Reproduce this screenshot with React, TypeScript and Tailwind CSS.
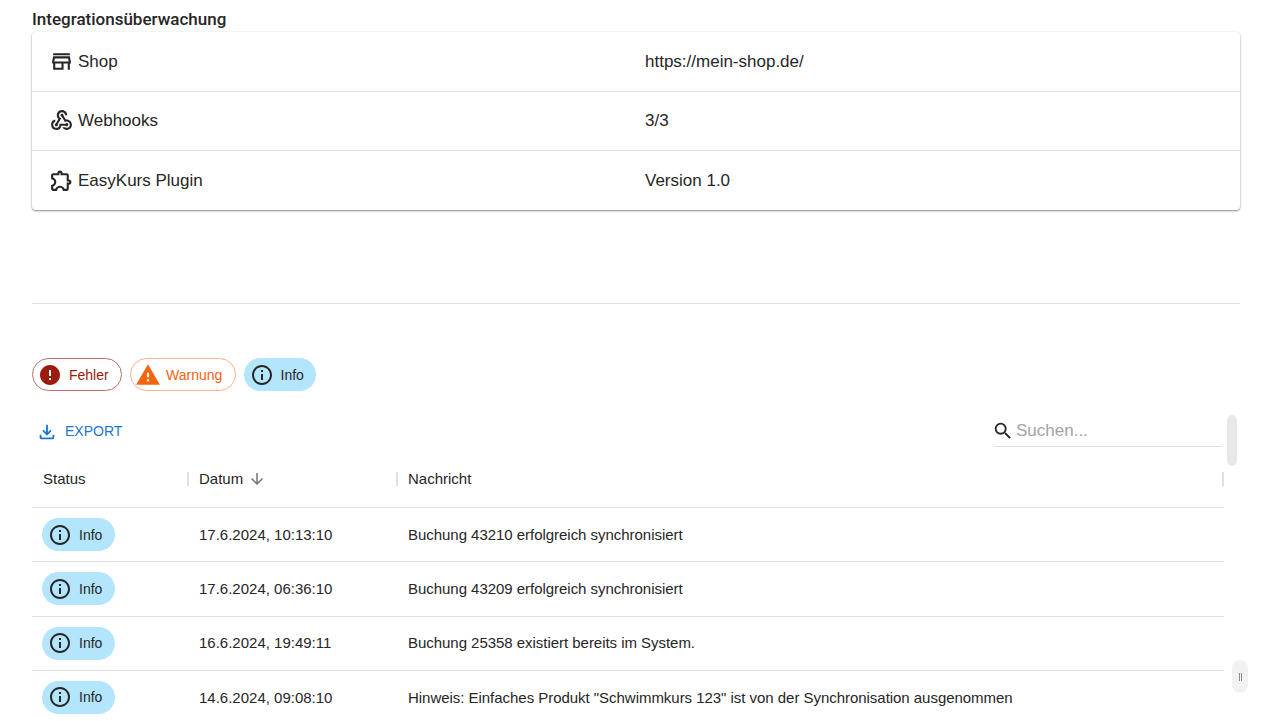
import { MdArrowDownward, MdError, MdInfoOutline, MdOutlineExtension, MdOutlineFileDownload, MdOutlineStore, MdSearch, MdWarning, MdWebhook } from "react-icons/md";
import type { ReactNode } from "react";

const ROWS = [
  { date: "17.6.2024, 10:13:10", msg: "Buchung 43210 erfolgreich synchronisiert" },
  { date: "17.6.2024, 06:36:10", msg: "Buchung 43209 erfolgreich synchronisiert" },
  { date: "16.6.2024, 19:49:11", msg: "Buchung 25358 existiert bereits im System." },
  { date: "14.6.2024, 09:08:10", msg: 'Hinweis: Einfaches Produkt "Schwimmkurs 123" ist von der Synchronisation ausgenommen' },
];

function InfoRow({ icon, label, value, last }: { icon: ReactNode; label: string; value: string; last?: boolean }) {
  return (
    <div className={`flex items-center ${last ? "h-[59px]" : "h-[59.5px] border-b border-[#e0e0e0]"}`}>
      <div className="flex w-[613px] items-center pl-[16.5px]">
        <span className="flex w-[29.5px]">{icon}</span>
        <span className="text-[17px]">{label}</span>
      </div>
      <span className="text-[17px]">{value}</span>
    </div>
  );
}

function InfoChip() {
  return (
    <div className="flex h-[33px] w-[72.5px] items-center rounded-full bg-[#b3e5fc] pl-[6px]">
      <MdInfoOutline size={24} />
      <span className="mt-[1px] ml-[7px] text-[14px]">Info</span>
    </div>
  );
}

export default function App() {
  return (
    <div className="relative h-[721px] w-[1272px] overflow-hidden bg-white px-[32px] font-['Liberation_Sans',sans-serif] text-[#262626]">
      <h2 className="h-[32px] pt-[10px] font-['Roboto',sans-serif] text-[17px] leading-[19px] font-medium">Integrationsüberwachung</h2>
      <div className="rounded bg-white shadow-[0_1px_2px_rgba(0,0,0,0.45),0_0_2px_rgba(0,0,0,0.08)]">
        <InfoRow icon={<MdOutlineStore size={25} />} label="Shop" value="https://mein-shop.de/" />
        <InfoRow icon={<MdWebhook size={25} />} label="Webhooks" value="3/3" />
        <InfoRow icon={<MdOutlineExtension size={25} />} label="EasyKurs Plugin" value="Version 1.0" last />
      </div>

      <div className="mt-[93px] border-t border-[#e0e0e0]" />

      <div className="mt-[54px] flex gap-[8px]">
        <div className="flex h-[33px] w-[90px] items-center rounded-full border border-[#b9706a] pl-[5px] text-[#9b1c0e]">
          <MdError size={24} />
          <span className="mt-[1px] ml-[7px] text-[14px]">Fehler</span>
        </div>
        <div className="flex h-[33px] w-[105.5px] items-center rounded-full border border-[#ffb08a] pl-[4px] text-[#f4650f]">
          <MdWarning size={26} />
          <span className="mt-[1px] ml-[5px] text-[14px]">Warnung</span>
        </div>
        <InfoChip />
      </div>

      <div className="mt-[24px] flex h-[32px] w-[1190px] items-center justify-between">
        <div className="flex items-center pt-[1px] pl-[4px] text-[#1976d2]">
          <MdOutlineFileDownload size={22} />
          <span className="ml-[7px] text-[14px]">EXPORT</span>
        </div>
        <div className="flex h-[32px] w-[228px] items-center border-b border-[#e0e0e0]">
          <MdSearch size={22} className="-ml-[2px]" />
          <span className="ml-[2px] text-[17px] text-[#a3a3a3]">Suchen...</span>
        </div>
      </div>

      <div className="w-[1192px]">
        <div className="flex h-[61px] items-center border-b border-[#e0e0e0] pt-[4px] text-[15px]">
          <div className="flex h-[14px] w-[157px] items-center border-r-2 border-[#e0e0e0] pl-[11px]">Status</div>
          <div className="flex h-[14px] w-[209px] items-center border-r-2 border-[#e0e0e0] pl-[10px]">
            Datum
            <MdArrowDownward size={18} className="ml-[5px] text-[#757575]" />
          </div>
          <div className="flex h-[14px] flex-1 items-center border-r-2 border-[#e0e0e0] pl-[10px]">Nachricht</div>
        </div>
        {ROWS.map((row) => (
          <div key={row.date} className="flex h-[54.25px] items-center border-b border-[#e0e0e0] text-[15px]">
            <div className="w-[167px] pl-[10px]"><InfoChip /></div>
            <div className="w-[209px] pt-[1px]">{row.date}</div>
            <div className="flex-1 pt-[1px] tracking-[-0.035px]">{row.msg}</div>
          </div>
        ))}
      </div>

      {/* overlay scroll handles */}
      <div className="absolute top-[415px] left-[1227px] h-[51px] w-[10px] rounded-full bg-[#e8e8e8]" />
      <div className="absolute top-[660px] left-[1232px] flex h-[33px] w-[16px] items-center justify-center gap-px rounded-full bg-[#f2f2f2]">
        <span className="h-[8px] w-px bg-[#8a8a8a]" />
        <span className="h-[8px] w-px bg-[#8a8a8a]" />
      </div>
    </div>
  );
}
